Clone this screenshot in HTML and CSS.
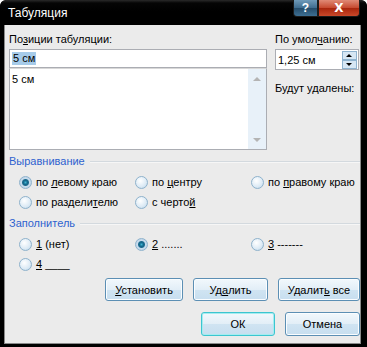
FILE: index.html
```html
<!DOCTYPE html>
<html lang="ru">
<head>
  <meta charset="UTF-8">
  <title>Табуляция</title>
  <link rel="stylesheet" href="styles.css">
</head>
<body>

<div class="window">
  <!-- Title bar -->
  <div class="titlebar">
    <span class="title">Табуляция</span>
    <div class="caption-btns">
      <span class="help-btn">?</span>
      <span class="close-btn">X</span>
    </div>
  </div>

  <div class="client">
    <div class="top">
      <div class="left-col">
        <div class="label">По<u>з</u>иции табуляции:</div>
        <div class="textbox"><span class="selected">5 см</span></div>
        <div class="listbox">
          <div class="list-items">5 см</div>
          <div class="scrollbar">
            <span class="arrow-up"></span>
            <span class="arrow-down"></span>
          </div>
        </div>
      </div>
      <div class="right-col">
        <div class="label">По умол<u>ч</u>анию:</div>
        <div class="spinbox">
          <span>1,25 см</span>
          <div class="spin-btns">
            <span class="spin-up"></span>
            <span class="spin-down"></span>
          </div>
        </div>
        <div class="removed-label">Будут удалены:</div>
      </div>
    </div>

    <!-- Alignment -->
    <div class="group-title"><span>Выравнивание</span></div>
    <div class="radio-grid">
      <div class="radio checked"><span>по <u>л</u>евому краю</span></div>
      <div class="radio"><span>по <u>ц</u>ентру</span></div>
      <div class="radio"><span>по <u>п</u>равому краю</span></div>
      <div class="radio"><span>по раздели<u>т</u>елю</span></div>
      <div class="radio"><span>с черто<u>й</u></span></div>
    </div>

    <!-- Leader -->
    <div class="group-title"><span>Заполнитель</span></div>
    <div class="radio-grid">
      <div class="radio"><span><u>1</u> (нет)</span></div>
      <div class="radio checked"><span><u>2</u> .......</span></div>
      <div class="radio"><span><u>3</u> -------</span></div>
      <div class="radio"><span><u>4</u> ____</span></div>
    </div>

    <div class="btn-row">
      <button class="btn btn-set"><u>У</u>становить</button>
      <button class="btn btn-del">Уд<u>а</u>лить</button>
      <button class="btn btn-delall">Удалит<u>ь</u> все</button>
    </div>
    <div class="btn-row second">
      <button class="btn btn-ok default">ОК</button>
      <button class="btn btn-cancel">Отмена</button>
    </div>
  </div>
</div>

</body>
</html>
```

FILE: styles.css
```css
body {
  margin: 0;
  background: #fff;
  font-family: 'Liberation Sans', Arial, sans-serif;
  font-size: 11px;
  color: #000;
}
u {
  text-underline-offset: 1px;
}
.window {
  width: 367px;
  height: 347px;
  background: #000;
  border-radius: 6px 6px 0 0;
  box-sizing: border-box;
  display: flex;
  flex-direction: column;
  overflow: hidden;
}
.titlebar {
  height: 25px;
  position: relative;
  background: linear-gradient(#2a2a2a 0, #050505 3px, #000 12px);
  border-radius: 6px 6px 0 0;
}
.title {
  position: absolute;
  left: 8px;
  top: 6px;
  color: #fff;
  font-size: 12px;
}
.caption-btns {
  position: absolute;
  left: 293px;
  top: 0;
  display: flex;
}
.help-btn, .close-btn {
  height: 17px;
  line-height: 17px;
  text-align: center;
  color: #fff;
  font-weight: bold;
  font-size: 12px;
  box-sizing: border-box;
  border: 1px solid #1b1b1b;
  border-top: none;
}
.help-btn {
  width: 25px;
  background: linear-gradient(#6f9ab9, #3e6c8f 50%, #254c6a 51%, #3d6f93);
  border-radius: 0 0 0 4px;
}
.close-btn {
  width: 42px;
  background: linear-gradient(#e08a76, #c6482e 50%, #a8250c 51%, #c8482a);
  border-radius: 0 0 4px 0;
  font-family: 'DejaVu Sans', sans-serif;
}
.client {
  flex: 1;
  margin: 0 6px 3px 4px;
  background: #ebebeb;
  border: 1px solid #8a8a8a;
  border-top: none;
  padding: 8px 0 0 4px;
}
.top {
  display: grid;
  grid-template-columns: 258px 84px;
  column-gap: 8px;
}
.label {
  height: 13px;
  line-height: 13px;
  margin-bottom: 3px;
}
.textbox {
  height: 19px;
  box-sizing: border-box;
  background: #fff;
  border: 1px solid #abadb3;
  padding: 2px 2px 0;
  line-height: 13px;
}
.selected {
  background: #a6cbe9;
  padding: 0 1px 1px;
}
.listbox {
  height: 82px;
  box-sizing: border-box;
  background: #fff;
  border: 1px solid #abadb3;
  border-top-color: #d8d8d8;
  display: flex;
}
.list-items {
  flex: 1;
  padding: 4px 2px;
  line-height: 13px;
}
.scrollbar {
  width: 18px;
  background: #e8f1f9;
  display: flex;
  flex-direction: column;
  justify-content: space-between;
  align-items: center;
  padding: 8px 0 7px;
}
.arrow-up, .arrow-down {
  width: 0;
  height: 0;
  border-left: 4px solid transparent;
  border-right: 4px solid transparent;
}
.arrow-up {
  border-bottom: 4px solid #b4b4b4;
}
.arrow-down {
  border-top: 4px solid #b4b4b4;
}
.spinbox {
  height: 21px;
  box-sizing: border-box;
  background: #fff;
  border: 1px solid #abadb3;
  display: flex;
  align-items: center;
  justify-content: space-between;
  padding-left: 2px;
}
.spin-btns {
  width: 15px;
  height: 18px;
  margin-right: 1px;
  display: flex;
  flex-direction: column;
}
.spin-up, .spin-down {
  flex: 1;
  background: #d7e7f4;
  border: 1px solid #8fb3cf;
  position: relative;
}
.spin-up::after, .spin-down::after {
  content: "";
  position: absolute;
  left: 3px;
  top: 2px;
  border-left: 3px solid transparent;
  border-right: 3px solid transparent;
}
.spin-up::after {
  border-bottom: 3px solid #000;
}
.spin-down::after {
  border-top: 3px solid #000;
}
.removed-label {
  margin-top: 12px;
}
.group-title {
  display: flex;
  align-items: center;
  margin: 4px 0 0;
  height: 14px;
  color: #2e62cf;
}
.group-title::after {
  content: "";
  flex: 1;
  height: 1px;
  background: #d3d9de;
  border-bottom: 1px solid #f6f6f6;
  margin: 1px 0 0 5px;
}
.radio-grid {
  display: grid;
  grid-template-columns: 116px 116px auto;
  grid-auto-rows: 20px;
  padding-left: 10px;
  margin: 4px 0 4px;
}
.radio {
  display: flex;
  align-items: center;
  white-space: nowrap;
}
.radio::before {
  content: "";
  width: 11px;
  height: 11px;
  border-radius: 50%;
  border: 1px solid #8eb2cc;
  background: radial-gradient(circle at 40% 35%, #ffffff, #dceaf5 60%, #b8d2e6);
  margin-right: 4px;
  flex: none;
}
.radio.checked::before {
  background: radial-gradient(circle, #3fb3cf 0, #15688d 2px, #1d6c8e 3px, #c9dced 4px, #b4cfe4);
}
.btn-row {
  display: flex;
  justify-content: flex-end;
  gap: 10px;
  margin-top: 3px;
}
.btn-row.second {
  margin-top: 11px;
}
.btn {
  font-family: inherit;
  font-size: 11px;
  height: 23px;
  padding: 0;
  border: 1px solid #5c8fb4;
  border-radius: 3px;
  background: linear-gradient(#f2f8fc, #e2eef7 50%, #d0e4f2 51%, #c7deef);
  box-shadow: inset 0 0 0 1px #fafdff;
  color: #000;
}
.btn-set { width: 78px; }
.btn-del { width: 75px; }
.btn-delall { width: 82px; }
.btn-ok { width: 74px; height: 24px; }
.btn-cancel { width: 75px; height: 24px; }
.btn.default {
  border-color: #3cc5d0;
  box-shadow: inset 0 0 0 1px #a5ecf0;
}
```
